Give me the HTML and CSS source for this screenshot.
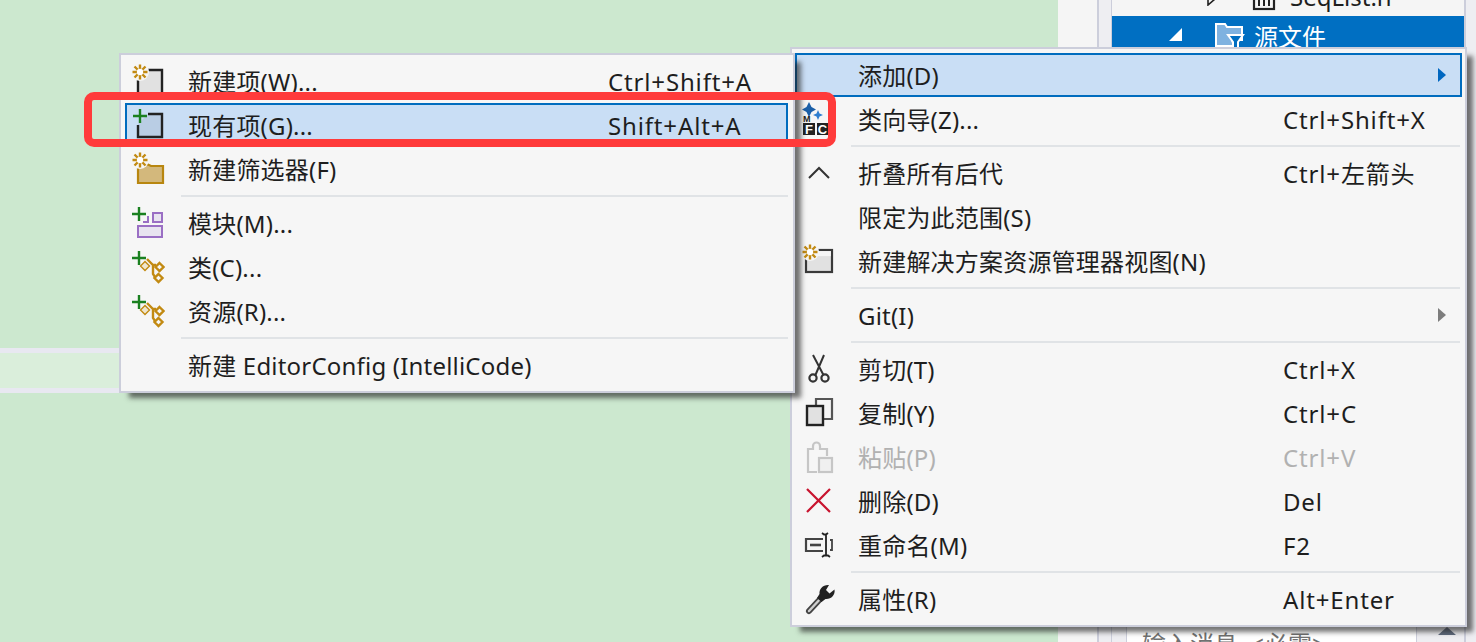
FILE: index.html
```html
<!DOCTYPE html>
<html lang="zh-CN">
<head>
<meta charset="utf-8">
<title>添加现有项</title>
<link rel="stylesheet" href="styles.css">
</head>
<body>
<svg class="defs" width="0" height="0" aria-hidden="true">
  <symbol id="star" viewBox="0 0 36 36" overflow="visible">
    <circle cx="11" cy="9" r="9" class="halo"/>
    <g stroke="#c28a12" stroke-width="2.400" stroke-linecap="butt">
      <path d="M11 1.500v15M3.500 9h15M5.500 3.500l11 11M16.500 3.500l-11 11"/>
    </g>
    <circle cx="11" cy="9" r="3.200" fill="#fff"/>
  </symbol>
  <symbol id="plus" viewBox="0 0 36 36">
    <path d="M11 2v14M4 9h14" stroke="#1a8020" stroke-width="2.400" fill="none"/>
  </symbol>
  <symbol id="addclass" viewBox="0 0 36 36">
    <path d="M16 12.500 20.500 17 16 21.500 11.500 17Z" fill="#efe6cf" stroke="#c28a12" stroke-width="1.400"/>
    <path d="M18 10 24 16H27M24 16V25L26 28" fill="none" stroke="#c28a12" stroke-width="2.400"/>
    <path d="M30.500 14 34.500 18 30.500 22 26.500 18Z" fill="#f6f6f6" stroke="#c28a12" stroke-width="2.400"/>
    <path d="M29.500 25 33.500 29 29.500 33 25.500 29Z" fill="#f6f6f6" stroke="#c28a12" stroke-width="2.400"/>
    <path d="M10 2v14M3 9h14" stroke="#1a8020" stroke-width="2.400" fill="none"/>
  </symbol>
</svg>

<main class="stage">
  <section class="editor">
    <div class="band"></div>
  </section>
  <div class="margin-strip"></div>
  <div class="dock-gap"></div>
  <section class="explorer">
    <div class="tree">
      <div class="tree-row">
        <svg class="twist-h" width="10" height="14" viewBox="0 0 10 14"><path d="M1 1 8 7 1 13Z" fill="none" stroke="#222" stroke-width="1.600"/></svg>
        <svg class="file-icon" width="24" height="32" viewBox="0 0 24 32"><rect x="2" y="1" width="20" height="24" fill="#f5f5f5" stroke="#222" stroke-width="2.200"/><path d="M7 8v14M12 8v14M17 8v14" stroke="#222" stroke-width="2"/></svg>
        <span class="file-name">SeqList.h</span>
      </div>
      <div class="tree-row selected">
        <svg class="twist" width="14" height="14" viewBox="0 0 14 14"><path d="M13 1V14H0Z" fill="#fff"/></svg>
        <svg class="folder-icon" width="30" height="26" viewBox="0 0 30 26">
          <path d="M2 2H11L13 5H28V18H18L20 24H2Z" fill="#7fb2e0" stroke="#fff" stroke-width="2"/>
          <path d="M14 13H29L24 20V29H19V20Z" fill="#006fc2" stroke="#fff" stroke-width="2"/>
        </svg>
        <span class="folder-name">源文件</span>
      </div>
    </div>
    <div class="commit-row">
      <div class="commit-box">输入消息 &lt;必需&gt;</div>
      <div class="scroll-up"></div>
    </div>
  </section>
  <div class="edge"></div>

  <!-- Parent context menu -->
  <nav class="menu menu-main">
    <div class="item active">
      <span class="ic"></span><span class="lb">添加(D)</span><span class="sc"></span><span class="arrow blue"></span>
    </div>
    <div class="item">
      <span class="ic"><svg width="36" height="36" viewBox="0 0 36 36">
        <path d="M10 1 12.500 6 17 8.500 12.500 11 10 16 7.500 11 3 8.500 7.500 6Z" fill="#1a5fa8"/>
        <path d="M19 9 20.500 12.500 24 14 20.500 15.500 19 19 17.500 15.500 14 14 17.500 12.500Z" fill="#2f7fd0"/>
        <text x="4" y="21" class="mini">M</text>
        <rect x="4" y="22" width="12" height="12" fill="#222"/>
        <rect x="18" y="22" width="11" height="12" fill="#222"/>
        <text x="10" y="33" class="badge">F</text>
        <text x="23.500" y="33" class="badge">C</text>
      </svg></span>
      <span class="lb">类向导(Z)...</span><span class="sc">Ctrl+Shift+X</span><span></span>
    </div>
    <div class="sep"></div>
    <div class="item">
      <span class="ic"><svg width="36" height="36" viewBox="0 0 36 36"><path d="M10 23 20 13 30 23" fill="none" stroke="#333" stroke-width="2"/></svg></span>
      <span class="lb">折叠所有后代</span><span class="sc">Ctrl+左箭头</span><span></span>
    </div>
    <div class="item">
      <span class="ic"></span><span class="lb">限定为此范围(S)</span><span class="sc"></span><span></span>
    </div>
    <div class="item">
      <span class="ic"><svg width="36" height="36" viewBox="0 0 36 36">
        <rect x="7" y="7" width="26" height="22" fill="#e1e1e1" stroke="#3a3a3a" stroke-width="2.200"/>
        <rect x="8.100" y="8.100" width="23.800" height="5" fill="#f6f6f6"/>
        <use href="#star" width="36" height="36"/>
      </svg></span>
      <span class="lb">新建解决方案资源管理器视图(N)</span><span class="sc"></span><span></span>
    </div>
    <div class="sep"></div>
    <div class="item">
      <span class="ic"></span><span class="lb">Git(I)</span><span class="sc"></span><span class="arrow"></span>
    </div>
    <div class="sep"></div>
    <div class="item">
      <span class="ic"><svg width="36" height="36" viewBox="0 0 36 36">
        <path d="M14 4 25 25M25 4 16 25" fill="none" stroke="#333" stroke-width="2"/>
        <circle cx="14" cy="27" r="3.600" fill="#f6f6f6" stroke="#333" stroke-width="2.200"/>
        <circle cx="26" cy="27" r="3.600" fill="#f6f6f6" stroke="#333" stroke-width="2.200"/>
      </svg></span>
      <span class="lb">剪切(T)</span><span class="sc">Ctrl+X</span><span></span>
    </div>
    <div class="item">
      <span class="ic"><svg width="36" height="36" viewBox="0 0 36 36">
        <path d="M17 11V4H33V24H24" fill="none" stroke="#555" stroke-width="2.200"/>
        <rect x="8" y="11" width="16" height="19" fill="#e1e1e1" stroke="#222" stroke-width="2.400"/>
      </svg></span>
      <span class="lb">复制(Y)</span><span class="sc">Ctrl+C</span><span></span>
    </div>
    <div class="item disabled">
      <span class="ic"><svg width="36" height="36" viewBox="0 0 36 36">
        <path d="M18 33H9V10H14V7A3.500 3.500 0 0 1 21 7V10H28V17" fill="none" stroke="#c6c6c6" stroke-width="2.200"/>
        <rect x="20" y="19" width="13" height="14" fill="#f0f0f0" stroke="#c6c6c6" stroke-width="2.200"/>
      </svg></span>
      <span class="lb">粘贴(P)</span><span class="sc">Ctrl+V</span><span></span>
    </div>
    <div class="item">
      <span class="ic"><svg width="36" height="36" viewBox="0 0 36 36"><path d="M8 6 31 29M31 6 8 29" stroke="#c8142f" stroke-width="2.200" fill="none"/></svg></span>
      <span class="lb">删除(D)</span><span class="sc">Del</span><span></span>
    </div>
    <div class="item">
      <span class="ic"><svg width="36" height="36" viewBox="0 0 36 36">
        <path d="M24 12H7V24H24" fill="none" stroke="#444" stroke-width="2.200"/>
        <path d="M11 18H22" stroke="#444" stroke-width="2.600"/>
        <path d="M23 6 25 7.500 27 7.500 29 6M27 7.500V28.500M23 30 25 28.500H29 L31 30" fill="none" stroke="#222" stroke-width="1.800"/>
        <path d="M31 13H33V23H31" fill="none" stroke="#444" stroke-width="1.800"/>
      </svg></span>
      <span class="lb">重命名(M)</span><span class="sc">F2</span><span></span>
    </div>
    <div class="sep"></div>
    <div class="item">
      <span class="ic"><svg width="36" height="36" viewBox="0 0 36 36">
        <path d="M10 30 24 15" stroke="#444" stroke-width="6" stroke-linecap="round"/>
        <path d="M10 30 23 16" stroke="#cfcfcf" stroke-width="2.400" stroke-linecap="round"/>
        <path d="M30 4C24 3.500 20 8 20.500 13L18 17 22.500 21 26.500 18C32 18.500 36.500 14 35.500 8.500L30.500 12.500 27 9Z" fill="#222"/>
      </svg></span>
      <span class="lb">属性(R)</span><span class="sc">Alt+Enter</span><span></span>
    </div>
  </nav>

  <!-- Add submenu -->
  <nav class="menu menu-sub">
    <div class="item">
      <span class="ic"><svg width="36" height="36" viewBox="0 0 36 36">
        <path d="M19 7H33V31H9V17Z" fill="#e1e1e1"/>
        <path d="M19 7H33V33M9 17V33" fill="none" stroke="#222" stroke-width="2.400"/>
        <use href="#star" width="36" height="36"/>
      </svg></span>
      <span class="lb">新建项(W)...</span><span class="sc">Ctrl+Shift+A</span>
    </div>
    <div class="item active">
      <span class="ic"><svg width="36" height="36" viewBox="0 0 36 36">
        <path d="M19 7H33V30H9V17Z" fill="#b9cde4"/>
        <path d="M19 7H33V30H9V18" fill="none" stroke="#222" stroke-width="2.400"/>
        <use href="#plus" width="36" height="36"/>
      </svg></span>
      <span class="lb">现有项(G)...</span><span class="sc">Shift+Alt+A</span>
    </div>
    <div class="item">
      <span class="ic"><svg width="36" height="36" viewBox="0 0 36 36">
        <path d="M9 15H15L18 13 22 15H34V32H9Z" fill="#d3b87c" stroke="#b8860f" stroke-width="2.200"/>
        <use href="#star" width="36" height="36"/>
      </svg></span>
      <span class="lb">新建筛选器(F)</span><span class="sc"></span>
    </div>
    <div class="sep"></div>
    <div class="item">
      <span class="ic"><svg width="36" height="36" viewBox="0 0 36 36">
        <rect x="9" y="21" width="24" height="11" fill="#e8e4f0" stroke="#9a6fc4" stroke-width="2"/>
        <rect x="24" y="8" width="9" height="9" fill="#e8e4f0" stroke="#9a6fc4" stroke-width="2"/>
        <path d="M14 17H19V11" fill="none" stroke="#9a6fc4" stroke-width="2"/>
        <use href="#plus" width="36" height="36" x="-1"/>
      </svg></span>
      <span class="lb">模块(M)...</span><span class="sc"></span>
    </div>
    <div class="item">
      <span class="ic"><svg width="36" height="36" viewBox="0 0 36 36"><use href="#addclass" width="36" height="36"/></svg></span>
      <span class="lb">类(C)...</span><span class="sc"></span>
    </div>
    <div class="item">
      <span class="ic"><svg width="36" height="36" viewBox="0 0 36 36"><use href="#addclass" width="36" height="36"/></svg></span>
      <span class="lb">资源(R)...</span><span class="sc"></span>
    </div>
    <div class="sep"></div>
    <div class="item">
      <span class="ic"></span><span class="lb nowrap">新建 EditorConfig (IntelliCode)</span><span class="sc"></span>
    </div>
  </nav>

  <div class="callout"></div>
</main>
</body>
</html>
```

FILE: styles.css
```css
* { box-sizing: border-box; }

html, body {
  margin: 0;
  padding: 0;
  background: #cce8cf;
}

.defs { position: absolute; }
.halo { fill: #f6f6f6; }

.stage {
  position: relative;
  display: flex;
  width: 1476px;
  height: 642px;
  overflow: hidden;
  font-family: "Noto Sans", "Noto Sans CJK SC", sans-serif;
  font-size: 24px;
  color: #1e1e1e;
}

/* Background */
.editor {
  flex: 0 0 1058px;
  padding-top: 348px;
  background: #cce8cf;
}

.band {
  height: 45px;
  background: #daeedb;
  border-top: 5px solid #e8e8f1;
  border-bottom: 5px solid #e8e8f1;
}

.margin-strip {
  flex: 0 0 39px;
  background: #f5f5f5;
}

.dock-gap {
  flex: 0 0 15px;
  background: #eeeef2;
  border-left: 2px solid #ccceDB;
  border-right: 1px solid #ccceDB;
}

.explorer {
  flex: 0 0 352px;
  display: flex;
  flex-direction: column;
  justify-content: space-between;
  background: #f5f5f5;
}

.edge {
  flex: 1;
  background: #eeeef2;
  border-left: 2px solid #ccceDB;
}

.tree { margin-top: -16px; }

.tree-row {
  display: flex;
  align-items: center;
  height: 32px;
  padding-left: 95px;
  white-space: nowrap;
}

.twist-h { flex: none; margin-top: -2px; }
.file-icon { flex: none; margin-left: 35px; margin-right: 14px; }
.file-name { margin-top: -7px; }

.tree-row.selected {
  height: 32px;
  padding-left: 57px;
  background: #006fc2;
  color: #fff;
}

.twist { flex: none; margin-top: 4px; }
.folder-icon { flex: none; margin-left: 31px; margin-top: 6px; overflow: visible; }
.folder-name { margin-left: 10px; margin-top: 10px; line-height: 32px; }

.commit-row {
  display: flex;
  height: 15px;
  padding-left: 14px;
  background: #eeeef2;
  overflow: hidden;
}

.commit-box {
  width: 291px;
  padding-left: 15px;
  background: #fff;
  border-left: 1px solid #ccceDB;
  border-right: 1px solid #ccceDB;
  color: #717171;
  line-height: 34px;
  word-spacing: 6px;
  white-space: nowrap;
}

.scroll-up {
  width: 0;
  height: 0;
  margin-left: 21px;
  border-left: 9px solid transparent;
  border-right: 9px solid transparent;
  border-bottom: 8px solid #5f6a7d;
}

/* Context menus */
.menu {
  position: absolute;
  background: #f6f6f6;
  border: 2px solid #ccceDB;
  box-shadow: 8px 7px 5px -2px rgba(30, 30, 30, .62);
}

.menu-main {
  left: 790px;
  top: 47px;
  width: 677px;
  padding: 4px 3px;
}

.menu-sub {
  left: 119px;
  top: 53px;
  width: 676px;
  padding: 4px 5px 4px 4px;
}

.item {
  display: grid;
  align-items: center;
  height: 44px;
  border: 2px solid transparent;
}

.menu-main .item { grid-template-columns: 61px 425px 1fr 22px; }
.menu-sub .item { grid-template-columns: 61px 420px 1fr; }

.item.active {
  background: #c9def5;
  border-color: #006cbe;
}

.ic {
  display: flex;
  height: 36px;
  margin-left: 2px;
}

.ic svg { overflow: visible; }

.lb, .sc {
  padding-top: 2px;
  line-height: 36px;
  white-space: nowrap;
}

.lb { letter-spacing: .2px; }
.sc { letter-spacing: .85px; }

.disabled { color: #b1b1b1; }

.sep {
  height: 2px;
  margin: 4px 2px 4px 56px;
  background: #e0e3e6;
}

.menu-sub .sep { margin-right: 0; }

.arrow {
  width: 0;
  height: 0;
  border-top: 7px solid transparent;
  border-bottom: 7px solid transparent;
  border-left: 8px solid #7d7d7d;
}

.arrow.blue { border-left-color: #0067c0; }

.mini {
  font-family: "Liberation Sans", sans-serif;
  font-size: 9px;
  font-weight: 700;
  fill: #222;
}

.badge {
  font-family: "Liberation Sans", sans-serif;
  font-size: 13px;
  font-weight: 700;
  fill: #fff;
  text-anchor: middle;
}

/* Red annotation */
.callout {
  position: absolute;
  left: 84px;
  top: 92px;
  width: 752px;
  height: 55px;
  border: 8px solid #ff3b3b;
  border-radius: 10px;
}
```
